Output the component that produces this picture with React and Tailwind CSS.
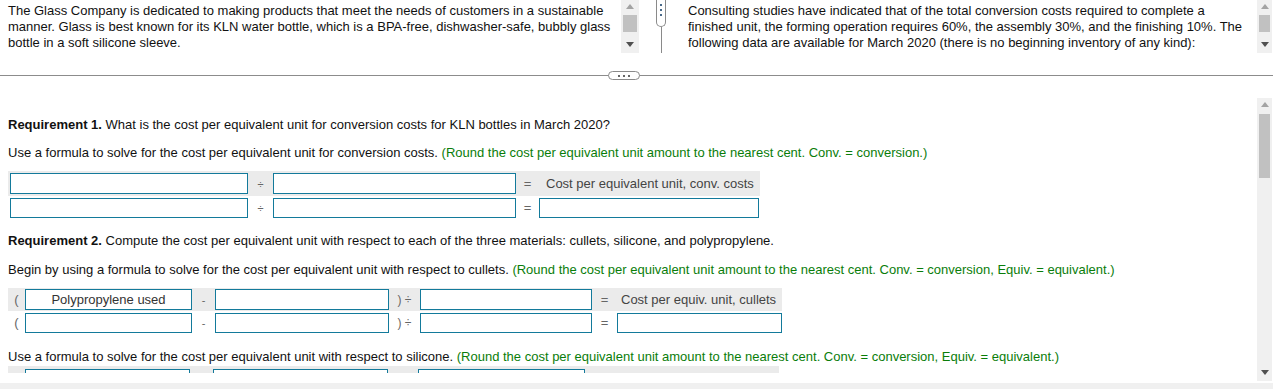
import React from "react";

function VScroll({ className, thumbTop, thumbH }) {
  return (
    <div className={"relative bg-[#f0f0f0] " + className}>
      <svg className="absolute left-1/2 -translate-x-1/2 top-[4px]" width="8" height="5" viewBox="0 0 8 5">
        <polygon points="0,5 8,5 4,0" fill="#a3a3a3" />
      </svg>
      <div
        className="absolute left-[2px] right-[2px] bg-[#c1c1c1]"
        style={{ top: thumbTop, height: thumbH }}
      />
      <svg className="absolute left-1/2 -translate-x-1/2 bottom-[6px]" width="8" height="5" viewBox="0 0 8 5">
        <polygon points="0,0 8,0 4,5" fill="#505050" />
      </svg>
    </div>
  );
}

function Box({ children }) {
  return (
    <div className="h-full border border-[#137a9b] bg-white flex items-center justify-center text-[13px] text-[#333] whitespace-nowrap overflow-hidden">
      {children}
    </div>
  );
}

function Sym({ children, className = "" }) {
  return (
    <div className={"flex items-center justify-center text-[11px] text-[#666] whitespace-nowrap " + className}>{children}</div>
  );
}

export default function App() {
  const green = "text-[#0a7d0a]";
  return (
    <div
      className="w-[1273px] h-[389px] overflow-hidden bg-white text-[13px] leading-[16px] text-[#111] flex flex-col"
      style={{ fontFamily: '"Liberation Sans", Arial, sans-serif' }}
    >
      {/* top split pane */}
      <div className="flex h-[53px] shrink-0">
        <div className="w-[621px] pl-[8px] pt-[3px] whitespace-nowrap overflow-hidden">
          The Glass Company is dedicated to making products that meet the needs of customers in a sustainable
          <br />
          manner. Glass is best known for its KLN water bottle, which is a BPA-free, dishwasher-safe, bubbly glass
          <br />
          bottle in a soft silicone sleeve.
        </div>
        <VScroll className="w-[18px] h-[53px]" thumbTop={15} thumbH={17} />
        <div className="w-[17px]" />
        <div className="w-[10px] flex flex-col items-center">
          <div className="w-[10px] h-[27px] border border-t-0 border-[#8a8a8a] rounded-b-full bg-white flex flex-col items-center pt-[4px] gap-[3px]">
            <div className="w-[2px] h-[2px] bg-[#4a6a8a]" />
            <div className="w-[2px] h-[2px] bg-[#4a6a8a]" />
            <div className="w-[2px] h-[2px] bg-[#4a6a8a]" />
          </div>
          <div className="w-px flex-1 bg-[#8a8a8a]" />
        </div>
        <div className="w-[22px]" />
        <div className="flex-1 pt-[3px] whitespace-nowrap overflow-hidden">
          Consulting studies have indicated that of the total conversion costs required to complete a
          <br />
          finished unit, the forming operation requires 60%, the assembly 30%, and the finishing 10%. The
          <br />
          following data are available for March 2020 (there is no beginning inventory of any kind):
        </div>
        <VScroll className="w-[15px] h-[53px] mr-[1px]" thumbTop={15} thumbH={17} />
      </div>

      {/* horizontal splitter */}
      <div className="relative h-px bg-[#8c8c8c] mt-[22px] shrink-0">
        <div className="absolute left-[608px] top-[-4px] w-[32px] h-[9px] rounded-full border border-[#8a8a8a] bg-white flex items-center justify-center gap-[3px]">
          <div className="w-[2px] h-[2px] bg-[#666]" />
          <div className="w-[2px] h-[2px] bg-[#666]" />
          <div className="w-[2px] h-[2px] bg-[#666]" />
        </div>
      </div>

      {/* bottom pane */}
      <div className="flex items-start mt-[19px] shrink-0">
        <div className="flex-1 h-[278px] overflow-hidden pl-[8px]">
          <p className="mt-[22px] whitespace-nowrap">
            <span className="font-bold">Requirement 1.</span> What is the cost per equivalent unit for conversion
            costs for KLN bottles in March 2020?
          </p>
          <p className="mt-[12px] whitespace-nowrap">
            Use a formula to solve for the cost per equivalent unit for conversion costs.{" "}
            <span className={green}>(Round the cost per equivalent unit amount to the nearest cent. Conv. = conversion.)</span>
          </p>

          <div className="mt-[10px] w-[752px]">
            <div className="grid grid-cols-[238px_25px_243px_23px_220px] h-[25px] py-[2px] pl-[2px] bg-[#ebebeb]">
              <Box />
              <Sym>÷</Sym>
              <Box />
              <Sym className="text-[13px]">=</Sym>
              <div className="flex items-center pl-[7px] text-[13px] text-[#444] whitespace-nowrap">
                Cost per equivalent unit, conv. costs
              </div>
            </div>
            <div className="grid grid-cols-[238px_25px_243px_23px_220px] h-[24px] py-[2px] pl-[2px]">
              <Box />
              <Sym>÷</Sym>
              <Box />
              <Sym className="text-[13px]">=</Sym>
              <Box />
            </div>
          </div>

          <p className="mt-[13px] whitespace-nowrap">
            <span className="font-bold">Requirement 2.</span> Compute the cost per equivalent unit with respect to each
            of the three materials: cullets, silicone, and polypropylene.
          </p>
          <p className="mt-[13px] whitespace-nowrap">
            Begin by using a formula to solve for the cost per equivalent unit with respect to cullets.{" "}
            <span className={green}>
              (Round the cost per equivalent unit amount to the nearest cent. Conv. = conversion, Equiv. = equivalent.)
            </span>
          </p>

          <div className="mt-[10px] w-[774px]">
            <div className="grid grid-cols-[17px_167px_23px_174px_31px_172px_25px_165px] h-[23px] py-[1px] bg-[#ebebeb]">
              <Sym className="text-[13px] text-[#555]">(</Sym>
              <Box>Polypropylene used</Box>
              <Sym>-</Sym>
              <Box />
              <Sym className="text-[12px]">) ÷</Sym>
              <Box />
              <Sym className="text-[13px]">=</Sym>
              <div className="flex items-center pl-[4px] text-[13px] text-[#444] whitespace-nowrap">
                Cost per equiv. unit, cullets
              </div>
            </div>
            <div className="grid grid-cols-[17px_167px_23px_174px_31px_172px_25px_165px] h-[24px] py-[2px]">
              <Sym className="text-[13px] text-[#555]">(</Sym>
              <Box />
              <Sym>-</Sym>
              <Box />
              <Sym className="text-[12px]">) ÷</Sym>
              <Box />
              <Sym className="text-[13px]">=</Sym>
              <Box />
            </div>
          </div>

          <p className="mt-[14px] whitespace-nowrap">
            Use a formula to solve for the cost per equivalent unit with respect to silicone.{" "}
            <span className={green}>
              (Round the cost per equivalent unit amount to the nearest cent. Conv. = conversion, Equiv. = equivalent.)
            </span>
          </p>
          <div className="mt-[1px] w-[771px]">
            <div className="grid grid-cols-[17px_165px_23px_175px_30px_167px] h-[23px] py-[3px] bg-[#ebebeb]">
              <div />
              <Box />
              <div />
              <Box />
              <div />
              <Box />
            </div>
          </div>
        </div>
        <VScroll className="w-[15px] h-[283px] mt-[3px] mr-[1px]" thumbTop={16} thumbH={64} />
      </div>

      <div className="mt-[2px] flex-1 bg-[#f0f0f0]" />
    </div>
  );
}
